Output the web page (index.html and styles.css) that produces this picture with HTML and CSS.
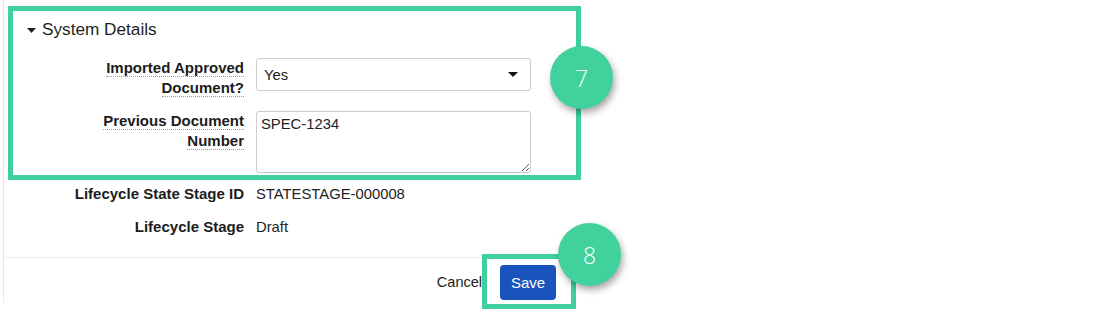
FILE: index.html
```html
<!DOCTYPE html>
<html>
<head>
<meta charset="utf-8">
<link rel="stylesheet" href="styles.css">
</head>
<body>
<div class="stage">
  <div class="panel">
    <div class="section-head">
      <svg class="caret" width="9" height="5" viewBox="0 0 9 5"><path d="M0 0 L9 0 L4.5 5 Z" fill="#222"/></svg>
      <span>System Details</span>
    </div>
    <div class="row row-select">
      <div class="label">
        <div><span class="lt">Imported Approved</span></div>
        <div><span class="lt">Document?</span></div>
      </div>
      <div class="select">
        <span>Yes</span>
        <svg width="10" height="5" viewBox="0 0 10 5"><path d="M0 0 L10 0 L5 5 Z" fill="#111"/></svg>
      </div>
    </div>
    <div class="row row-text">
      <div class="label">
        <div><span class="lt">Previous Document</span></div>
        <div><span class="lt">Number</span></div>
      </div>
      <textarea class="textarea">SPEC-1234</textarea>
    </div>
    <div class="row row-ro first">
      <div class="label plain">Lifecycle State Stage ID</div>
      <div class="value">STATESTAGE-000008</div>
    </div>
    <div class="row row-ro">
      <div class="label plain">Lifecycle Stage</div>
      <div class="value">Draft</div>
    </div>
    <div class="footer">
      <span class="cancel">Cancel</span>
      <button class="save">Save</button>
    </div>
  </div>

  <div class="hl hl-section"></div>
  <div class="hl hl-save"></div>
  <div class="badge badge-7">7</div>
  <div class="badge badge-8">8</div>
</div>
</body>
</html>
```

FILE: styles.css
```css
html, body {
  margin: 0;
  padding: 0;
  background: #ffffff;
}

body {
  font-family: "Liberation Sans", Arial, sans-serif;
  color: #222222;
}

.stage {
  position: relative;
  width: 1100px;
  height: 321px;
}

.panel {
  margin-left: 3px;
  width: 567px;
  height: 303px;
  border-left: 1px solid #e8e8e8;
  display: flex;
  flex-direction: column;
}

.section-head {
  display: flex;
  align-items: center;
  gap: 6px;
  margin: 17px 0 0 23px;
  height: 24px;
  font-size: 17.2px;
  color: #1e1e1e;
}

.caret {
  margin-top: 3px;
}

.row {
  display: flex;
  align-items: flex-start;
  gap: 12px;
}

.row-select {
  margin-top: 17px;
}

.row-text {
  margin-top: 13px;
}

.row-ro.first {
  margin-top: 11px;
}

.row-ro {
  margin-top: 13px;
}

.label {
  width: 240px;
  flex: none;
  text-align: right;
  font-weight: bold;
  font-size: 15px;
  line-height: 20px;
  color: #1c1c1c;
}

.lt {
  border-bottom: 1px dotted #9a9a9a;
}

.value {
  font-size: 14.8px;
  line-height: 20px;
  color: #222222;
}

.select {
  box-sizing: border-box;
  width: 275px;
  height: 33px;
  border: 1px solid #cccccc;
  border-radius: 3px;
  display: flex;
  align-items: center;
  justify-content: space-between;
  padding: 0 12px 0 7px;
  font-size: 14.8px;
  color: #222222;
  background: #ffffff;
}

.textarea {
  box-sizing: border-box;
  width: 275px;
  height: 62px;
  margin: 0;
  border: 1px solid #cccccc;
  border-radius: 3px;
  padding: 3px 4px;
  font-family: "Liberation Sans", Arial, sans-serif;
  font-size: 14.8px;
  line-height: 18px;
  color: #222222;
  resize: vertical;
  outline: none;
  display: block;
}

.footer {
  margin-top: auto;
  height: 46px;
  border-top: 1px solid #ebebeb;
  display: flex;
  align-items: flex-start;
  justify-content: flex-end;
  gap: 18px;
  padding: 7px 15px 0 0;
  box-sizing: border-box;
}

.cancel {
  font-size: 14.5px;
  line-height: 35px;
  color: #222222;
}

.save {
  width: 56px;
  height: 35px;
  border: none;
  border-radius: 4px;
  background: #1953bd;
  color: #ffffff;
  font-family: "Liberation Sans", Arial, sans-serif;
  font-size: 15px;
  padding: 0;
}

.hl {
  position: absolute;
  box-sizing: border-box;
  border: 5px solid #3fd09c;
}

.hl-section {
  left: 8px;
  top: 6px;
  width: 573px;
  height: 174px;
}

.hl-save {
  left: 482px;
  top: 254px;
  width: 94px;
  height: 55px;
}

.badge {
  position: absolute;
  width: 63px;
  height: 63px;
  border-radius: 50%;
  background: #40d19d;
  color: #ffffff;
  font-family: "Open Sans", sans-serif;
  font-weight: 300;
  font-size: 23px;
  display: flex;
  align-items: center;
  justify-content: center;
  box-shadow: 2px 4px 7px rgba(0, 0, 0, 0.35);
}

.badge-7 {
  left: 550px;
  top: 46px;
}

.badge-8 {
  left: 558px;
  top: 223px;
}
```
